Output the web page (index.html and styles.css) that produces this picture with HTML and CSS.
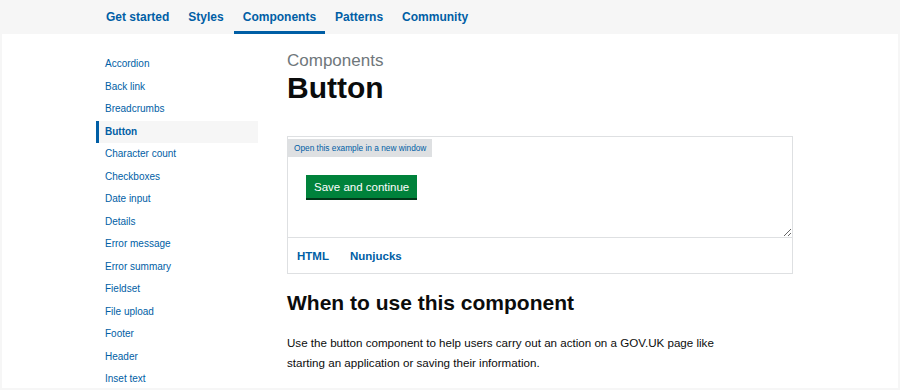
FILE: index.html
```html
<!DOCTYPE html>
<html lang="en">
<head>
    <meta charset="UTF-8">
    <meta name="viewport" content="width=device-width, initial-scale=1.0">
    <title>Button - GOV.UK Design System</title>
    <link rel="stylesheet" href="styles.css">
</head>
<body>
    <!-- Site navigation -->
    <header class="top-nav">
        <ul class="top-nav__list">
            <li><a class="top-nav__link" href="#">Get started</a></li>
            <li><a class="top-nav__link" href="#">Styles</a></li>
            <li class="is-current"><a class="top-nav__link" href="#">Components</a></li>
            <li><a class="top-nav__link" href="#">Patterns</a></li>
            <li><a class="top-nav__link" href="#">Community</a></li>
        </ul>
    </header>

    <div class="page">
        <!-- Sub navigation -->
        <nav class="side-nav">
            <ul>
                <li><a href="#">Accordion</a></li>
                <li><a href="#">Back link</a></li>
                <li><a href="#">Breadcrumbs</a></li>
                <li class="is-current"><a href="#">Button</a></li>
                <li><a href="#">Character count</a></li>
                <li><a href="#">Checkboxes</a></li>
                <li><a href="#">Date input</a></li>
                <li><a href="#">Details</a></li>
                <li><a href="#">Error message</a></li>
                <li><a href="#">Error summary</a></li>
                <li><a href="#">Fieldset</a></li>
                <li><a href="#">File upload</a></li>
                <li><a href="#">Footer</a></li>
                <li><a href="#">Header</a></li>
                <li><a href="#">Inset text</a></li>
            </ul>
        </nav>

        <main class="content">
            <span class="caption">Components</span>
            <h1>Button</h1>

            <div class="example">
                <div class="example__frame">
                    <a class="example__open" href="#">Open this example in a new window</a>
                    <div class="example__body">
                        <button class="btn">Save and continue</button>
                    </div>
                </div>
                <div class="example__tabs">
                    <a href="#">HTML</a>
                    <a href="#">Nunjucks</a>
                </div>
            </div>

            <h2>When to use this component</h2>
            <p>Use the button component to help users carry out an action on a GOV.UK page like starting an application or saving their information.</p>
        </main>
    </div>
</body>
</html>
```

FILE: styles.css
```css
body {
    margin: 0;
    background-color: #f6f6f6;
    font-family: "Liberation Sans", Arial, sans-serif;
    color: #0b0c0c;
}
a {
    color: #005ea5;
    text-decoration: none;
}
ul {
    list-style: none;
    margin: 0;
    padding: 0;
}

/* top navigation */
.top-nav {
    height: 34px;
}
.top-nav__list {
    display: flex;
    gap: 1px;
    padding-left: 97px;
}
.top-nav__link {
    display: block;
    padding: 3px 9px 0;
    line-height: 28px;
    border-bottom: 3px solid transparent;
    font-size: 12px;
    font-weight: bold;
}
.is-current .top-nav__link {
    border-bottom-color: #005ea5;
}

/* page */
.page {
    display: flex;
    margin: 0 2px;
    height: 354px;
    overflow: hidden;
    background-color: #fff;
}
.side-nav {
    width: 162px;
    margin-left: 94px;
    padding-top: 19px;
}
.side-nav a {
    display: block;
    padding-left: 6px;
    border-left: 3px solid transparent;
    line-height: 22.5px;
    font-size: 10px;
}
.side-nav .is-current a {
    font-weight: bold;
    background-color: #f6f6f6;
    border-left-color: #005ea5;
}

.content {
    width: 506px;
    margin-left: 29px;
    padding-top: 17px;
}
.caption {
    display: block;
    font-size: 17px;
    line-height: 20px;
    color: #6f777b;
}
h1 {
    margin: 0;
    font-size: 30px;
    line-height: 34px;
}

/* example */
.example {
    margin-top: 31px;
    border: 1px solid #dee0e2;
}
.example__frame {
    height: 100px;
    border-bottom: 1px solid #dee0e2;
    resize: vertical;
    overflow: auto;
}
.example__open {
    display: inline-block;
    padding: 0 6px;
    line-height: 18px;
    font-size: 8.3px;
    background-color: #dee0e2;
}
.example__body {
    padding: 18px 18px;
}
.btn {
    padding: 0 8px;
    height: 23px;
    border: none;
    background-color: #00823b;
    box-shadow: 0 2px 0 #003618;
    color: #fff;
    font-family: inherit;
    font-size: 11.5px;
}
.example__tabs {
    display: flex;
    gap: 3px;
    height: 35px;
    align-items: center;
}
.example__tabs a {
    padding: 0 9px;
    font-size: 11.5px;
    font-weight: bold;
}

h2 {
    margin: 16px 0 0;
    font-size: 21px;
    line-height: 26px;
}
p {
    margin: 17px 0 0;
    max-width: 440px;
    font-size: 11.6px;
    line-height: 20px;
}
```
